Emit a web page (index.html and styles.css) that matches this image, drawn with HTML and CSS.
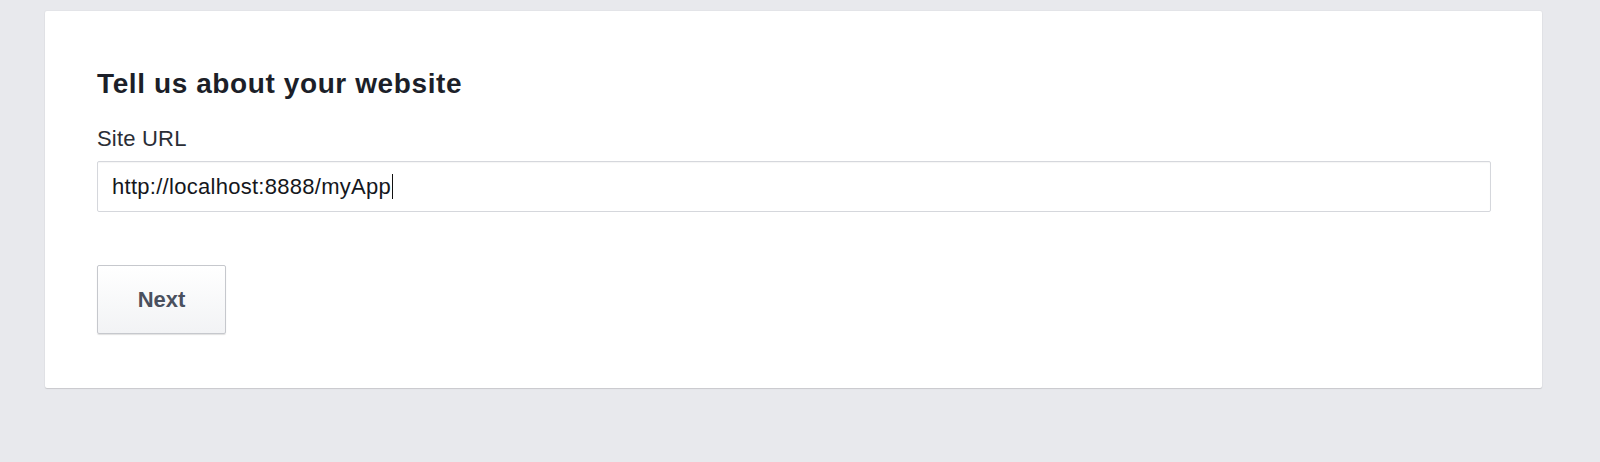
FILE: index.html
```html
<!DOCTYPE html>
<html lang="en">
<head>
<meta charset="utf-8">
<title>Tell us about your website</title>
<link rel="stylesheet" href="styles.css">
</head>
<body>
<main class="card">
  <h1 class="title">Tell us about your website</h1>
  <label class="label" for="site-url">Site URL</label>
  <div class="field" id="site-url" role="textbox"><span class="value">http://localhost:8888/myApp</span><span class="caret"></span></div>
  <button class="btn" type="button">Next</button>
</main>
</body>
</html>
```
FILE: styles.css
```css
html, body {
  margin: 0;
  padding: 0;
}
body {
  background: #e8e9ed;
  font-family: "Liberation Sans", Arial, sans-serif;
  height: 462px;
  overflow: hidden;
}
.card {
  box-sizing: border-box;
  margin: 11px 0 0 45px;
  width: 1497px;
  height: 377px;
  background: #ffffff;
  border-radius: 2px;
  box-shadow: 0 1px 1px rgba(0, 0, 0, 0.12), 0 0 0 1px rgba(0, 0, 0, 0.02);
  padding: 57px 51px 0 52px;
  display: flex;
  flex-direction: column;
  align-items: flex-start;
}
.title {
  margin: 0;
  font-size: 28px;
  line-height: 32px;
  font-weight: 700;
  letter-spacing: 0.6px;
  color: #1c1f29;
}
.label {
  margin-top: 27px;
  font-size: 22px;
  line-height: 24px;
  letter-spacing: 0.2px;
  color: #2b2e36;
}
.field {
  box-sizing: border-box;
  margin-top: 10px;
  width: 100%;
  height: 51px;
  border: 1px solid #d5d7dc;
  border-radius: 2px;
  box-shadow: inset 0 1px 1px rgba(0, 0, 0, 0.04);
  padding: 0 14px;
  display: flex;
  align-items: center;
  font-size: 22px;
  letter-spacing: 0.28px;
  color: #15171c;
}
.caret {
  display: inline-block;
  width: 1px;
  height: 25px;
  background: #111;
  margin-left: 1px;
}
.btn {
  box-sizing: border-box;
  margin-top: 53px;
  width: 129px;
  height: 69px;
  border: 1px solid #c6c8cd;
  border-radius: 2px;
  background: linear-gradient(#ffffff, #f2f3f5);
  box-shadow: 0 1px 1px rgba(0, 0, 0, 0.12);
  font-family: "Liberation Sans", Arial, sans-serif;
  font-size: 22px;
  font-weight: 700;
  color: #4a505e;
  padding: 0;
}
```
